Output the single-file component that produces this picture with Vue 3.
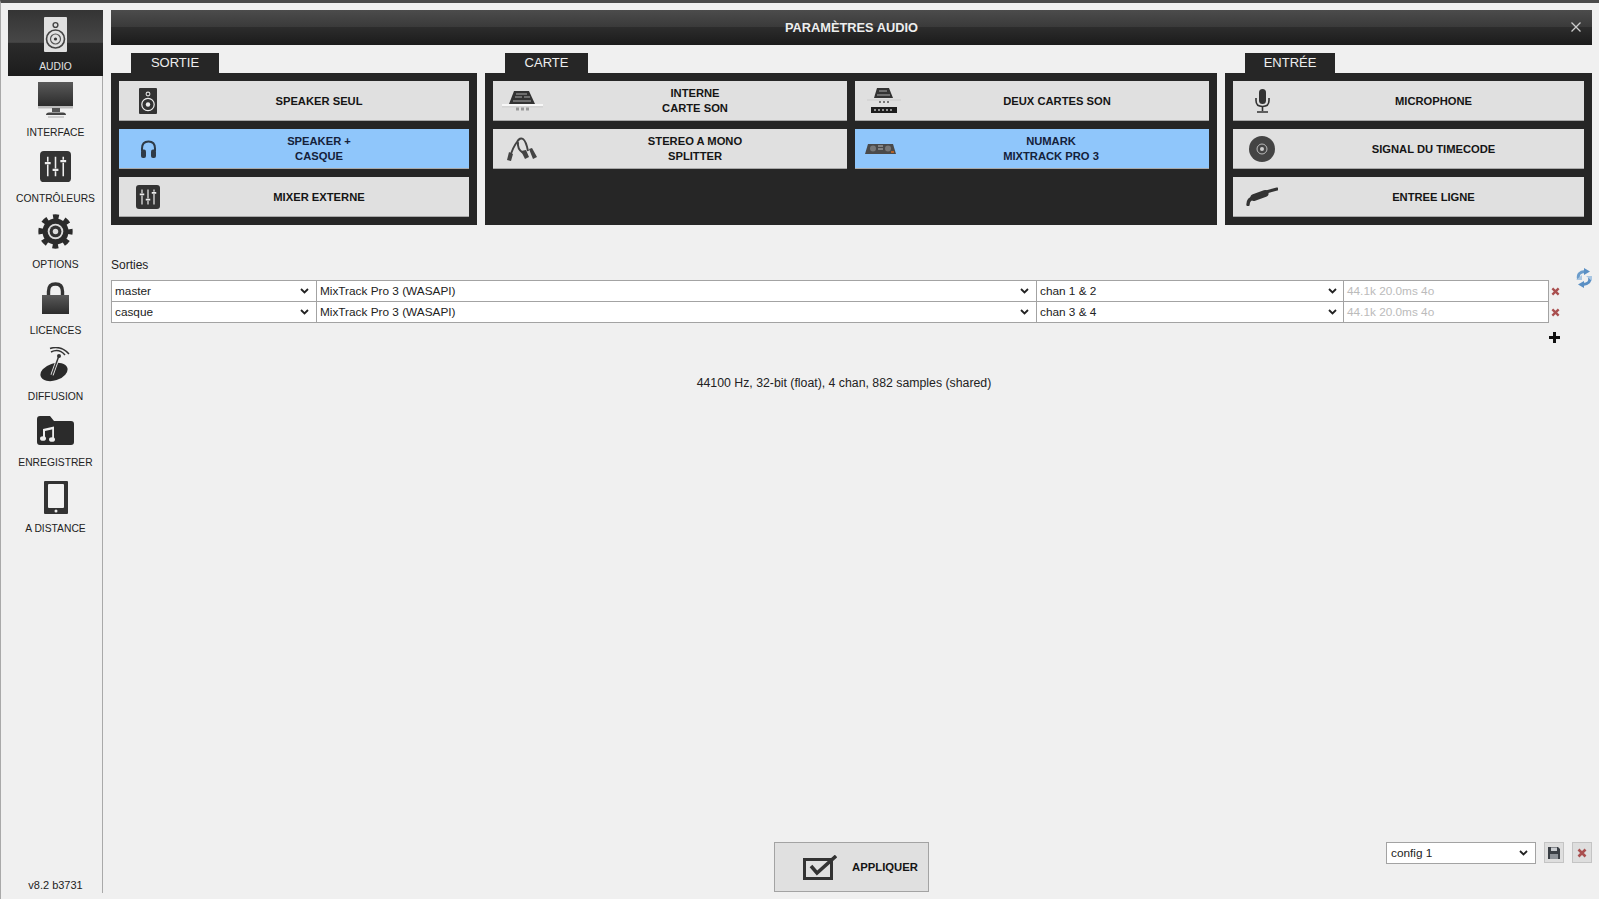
<script setup>
const navItems = [
  { label: 'Audio', icon: 'i-speaker-light', w: 23, h: 35, active: true },
  { label: 'Interface', icon: 'i-monitor', w: 35, h: 37 },
  { label: 'Contrôleurs', icon: 'i-sliders', w: 31, h: 31 },
  { label: 'Options', icon: 'i-gear', w: 35, h: 40 },
  { label: 'Licences', icon: 'i-lock', w: 27, h: 33 },
  { label: 'Diffusion', icon: 'i-dish', w: 31, h: 35 },
  { label: 'Enregistrer', icon: 'i-folder', w: 37, h: 29 },
  { label: 'A distance', icon: 'i-tablet', w: 24, h: 36 },
];

const sections = [
  {
    title: 'Sortie',
    tabWidth: 88,
    cols: 1,
    pads: [
      { lines: ['Speaker seul'], icon: 'i-speaker-dark', w: 18, h: 26 },
      { lines: ['Speaker +', 'Casque'], icon: 'i-headphones', w: 17, h: 18, active: true },
      { lines: ['Mixer externe'], icon: 'i-sliders', w: 24, h: 24 },
    ],
  },
  {
    title: 'Carte',
    tabWidth: 83,
    cols: 2,
    pads: [
      { lines: ['Interne', 'Carte son'], icon: 'i-card', w: 41, h: 20 },
      { lines: ['Deux cartes son'], icon: 'i-two-cards', w: 34, h: 25 },
      { lines: ['Stereo a mono', 'Splitter'], icon: 'i-splitter', w: 30, h: 24 },
      { lines: ['Numark', 'Mixtrack Pro 3'], icon: 'i-mixtrack', w: 31, h: 10, active: true, tight: true },
    ],
  },
  {
    title: 'Entrée',
    tabWidth: 90,
    cols: 1,
    pads: [
      { lines: ['Microphone'], icon: 'i-mic', w: 17, h: 24 },
      { lines: ['Signal du timecode'], icon: 'i-disc', w: 26, h: 26 },
      { lines: ['Entree ligne'], icon: 'i-jack', w: 32, h: 19 },
    ],
  },
];

const outputs = [
  { name: 'master', device: 'MixTrack Pro 3 (WASAPI)', channels: 'chan 1 & 2', info: '44.1k 20.0ms 4o' },
  { name: 'casque', device: 'MixTrack Pro 3 (WASAPI)', channels: 'chan 3 & 4', info: '44.1k 20.0ms 4o' },
];
</script>

<template>
  <div class="app">
    <svg class="sprites" aria-hidden="true">
      <defs>
        <linearGradient id="g-metal" x1="0" y1="0" x2="0" y2="1">
          <stop offset="0" stop-color="#5a5a5a" />
          <stop offset="1" stop-color="#2c2c2c" />
        </linearGradient>
        <symbol id="i-speaker-light" viewBox="0 0 23 35">
          <rect width="23" height="35" rx="1" fill="#e0e0e0" />
          <circle cx="11.5" cy="8" r="2.4" fill="none" stroke="#444" stroke-width="1.4" />
          <circle cx="11.5" cy="22" r="9" fill="none" stroke="#444" stroke-width="1.6" />
          <circle cx="11.5" cy="22" r="5" fill="none" stroke="#555" stroke-width="1.2" />
          <circle cx="11.5" cy="22" r="1.6" fill="#333" />
        </symbol>
        <symbol id="i-speaker-dark" viewBox="0 0 18 26">
          <rect width="18" height="26" rx="1" fill="#333" />
          <circle cx="9" cy="6" r="1.9" fill="none" stroke="#ddd" stroke-width="1.1" />
          <circle cx="9" cy="16.5" r="6.2" fill="none" stroke="#eee" stroke-width="1.2" />
          <circle cx="9" cy="16.5" r="2.2" fill="#eee" />
        </symbol>
        <symbol id="i-monitor" viewBox="0 0 35 37">
          <rect width="35" height="24" fill="url(#g-metal)" />
          <rect y="24" width="35" height="2.5" fill="#bbb" />
          <rect x="14" y="26" width="8" height="4" fill="#555" />
          <path d="M8 33 Q8 30.5 11 30.5 H25 Q28 30.5 28 33 Z" fill="#444" />
          <rect x="10" y="34" width="16" height="2" fill="#ccc" />
        </symbol>
        <symbol id="i-sliders" viewBox="0 0 32 32">
          <rect width="32" height="32" rx="4" fill="#333" />
          <g stroke="#eee" stroke-width="1.6" fill="none">
            <path d="M8 6 V11 M8 14 V26 M16 6 V18 M16 21 V26 M24 6 V9 M24 12 V26" />
            <path d="M5 12.5 H11 M13 19.5 H19 M21 10.5 H27" stroke-width="2.2" />
          </g>
        </symbol>
        <symbol id="i-gear" viewBox="0 -2 33 38">
          <circle cx="16.5" cy="16.5" r="13.6" fill="none" stroke="#2b2b2b" stroke-width="5.4" stroke-dasharray="5.34 5.34" stroke-dashoffset="2.67" />
          <circle cx="16.5" cy="16.5" r="12.4" fill="#2b2b2b" />
          <circle cx="16.5" cy="16.5" r="7.4" fill="#ddd" />
          <circle cx="16.5" cy="16.5" r="5.6" fill="#333" />
          <circle cx="16.5" cy="16.5" r="2.6" fill="#ddd" />
        </symbol>
        <symbol id="i-lock" viewBox="0 0 27 33">
          <path d="M6.5 14 V9.5 Q6.5 2 13.5 2 Q20.5 2 20.5 9.5 V14" fill="none" stroke="#333" stroke-width="3.4" />
          <rect y="13" width="27" height="19" fill="url(#g-metal)" />
        </symbol>
        <symbol id="i-dish" viewBox="0 0 31 35">
          <ellipse cx="14" cy="25" rx="14" ry="8.5" transform="rotate(-18 14 25)" fill="#2a2a2a" />
          <path d="M12 28 L18.5 10" stroke="#eee" stroke-width="3.2" />
          <path d="M12 28 L18.5 10" stroke="#333" stroke-width="1.5" />
          <circle cx="19" cy="9" r="2" fill="#333" />
          <g fill="none" stroke="#333" stroke-width="1.5">
            <path d="M11 5 Q19 1 25 8" />
            <path d="M10 1.5 Q21 -2 29 7" />
          </g>
        </symbol>
        <symbol id="i-folder" viewBox="0 0 37 29">
          <path d="M0 3 Q0 0 3 0 H13 L17 5 H34 Q37 5 37 8 V26 Q37 29 34 29 H3 Q0 29 0 26 Z" fill="#2b2b2b" />
          <g fill="#eee">
            <path d="M6 13 L17 10.5 V13 L8 15 V22 H6 Z" />
            <rect x="15.2" y="11" width="1.8" height="12" />
            <ellipse cx="6" cy="22.5" rx="3" ry="2.3" />
            <ellipse cx="15" cy="23.5" rx="3" ry="2.3" />
          </g>
        </symbol>
        <symbol id="i-tablet" viewBox="0 -3 24 36">
          <rect width="24" height="33" rx="1" fill="#333" />
          <rect x="4" y="3" width="16" height="24" rx="1" fill="#f2f2f2" />
          <circle cx="12" cy="30" r="1.5" fill="#eee" />
        </symbol>
        <symbol id="i-headphones" viewBox="0 0 17 18">
          <path d="M2 11 V8.5 Q2 1.5 8.5 1.5 Q15 1.5 15 8.5 V11" fill="none" stroke="#2f3b47" stroke-width="2" />
          <rect x="1" y="9.5" width="5" height="8.5" rx="2" fill="#2f3b47" />
          <rect x="11" y="9.5" width="5" height="8.5" rx="2" fill="#2f3b47" />
        </symbol>
        <symbol id="i-card" viewBox="0 0 41 20">
          <path d="M12 0 H27 L33 13 H7 Z" fill="#333" />
          <path d="M14 3 H25 M13 6 H20 M22 6 H28 M11 10 H29" stroke="#aaa" stroke-width="1" />
          <rect y="13" width="41" height="2.5" fill="#f7f7f7" />
          <rect y="15.5" width="41" height=".7" fill="#bbb" />
          <path d="M14 16.5 H17 V19.5 H14 Z M19 16.5 H22 V19.5 H19 Z M24 16.5 H27 V19.5 H24 Z" fill="#999" />
        </symbol>
        <symbol id="i-two-cards" viewBox="0 0 34 25">
          <path d="M10 0 H22 L26 10 H7 Z" fill="#333" />
          <path d="M12 3 H20 M10 7 H23" stroke="#aaa" stroke-width="1" />
          <path d="M0 12 H34" stroke="#ccc" stroke-width="1" />
          <path d="M12 13 H14 V15 H12 Z M16 13 H18 V15 H16 Z M20 13 H22 V15 H20 Z" fill="#777" />
          <rect x="4" y="19" width="26" height="6" fill="#1d1d1d" />
          <path d="M7 22 H27" stroke="#bbb" stroke-width="1.5" stroke-dasharray="2 2" />
        </symbol>
        <symbol id="i-splitter" viewBox="0 0 30 24">
          <g fill="none" stroke="#444" stroke-width="2">
            <path d="M3 20 Q6 10 10 5 Q13 0 16 2 Q19 4 21 14" />
            <path d="M11 5 Q10 12 16 16" />
          </g>
          <path d="M0 23 L2 15 L6 17 L4 24 Z M14 14 L19 13 L22 20 L18 22 Z M22 12 L25 11 L30 20 L26 22 Z" fill="#444" />
        </symbol>
        <symbol id="i-mixtrack" viewBox="0 0 31 10">
          <path d="M3 0 H28 L31 10 H0 Z" fill="#4a4a4a" />
          <circle cx="8" cy="4.5" r="3" fill="#777" />
          <circle cx="23" cy="4.5" r="3" fill="#777" />
          <path d="M13 2 H18 M13 5 H18" stroke="#bbb" stroke-width="1" />
          <rect x="26" y="7" width="3" height="2" fill="#b5622a" />
        </symbol>
        <symbol id="i-mic" viewBox="0 0 17 24">
          <rect x="5" y="0" width="7" height="15" rx="3.5" fill="#333" />
          <path d="M2 9 V11.5 Q2 17.5 8.5 17.5 Q15 17.5 15 11.5 V9" fill="none" stroke="#333" stroke-width="1.6" />
          <path d="M8.5 17.5 V22 M3 23 H14" stroke="#333" stroke-width="1.6" />
        </symbol>
        <symbol id="i-disc" viewBox="0 0 26 26">
          <circle cx="13" cy="13" r="13" fill="#444" />
          <circle cx="13" cy="13" r="5" fill="none" stroke="#bbb" stroke-width="1" />
          <circle cx="13" cy="13" r="2" fill="#ccc" />
        </symbol>
        <symbol id="i-jack" viewBox="0 0 32 19">
          <g fill="none" stroke="#333" stroke-linecap="round">
            <path d="M2 17.5 Q2 12 8 10.5" stroke-width="3.4" />
            <path d="M8 10.5 L19 6.5" stroke-width="7" />
            <path d="M20 5 L31 2" stroke-width="3" />
          </g>
        </symbol>
        <symbol id="i-refresh" viewBox="0 0 16 20">
          <g fill="none" stroke-width="3">
            <path d="M2.5 11 Q1 4 9 3.5" stroke="#6b9ccb" />
            <path d="M13.5 9 Q15 16 7 16.5" stroke="#5a8fc4" />
          </g>
          <path d="M8 0 L14 3.5 L8 7 Z M8 13 L2 16.5 L8 20 Z" fill="#5a8fc4" />
          <path d="M10 8 H16 V13 Z M0 12 H6 V7 Z" fill="#a9c6e2" />
        </symbol>
        <symbol id="i-cross" viewBox="0 0 10 10">
          <path d="M1.5 1.5 L8.5 8.5 M8.5 1.5 L1.5 8.5" stroke="#a94f4f" stroke-width="2.6" />
        </symbol>
        <symbol id="i-floppy" viewBox="0 0 12 12">
          <path d="M0 0 H10 L12 2 V12 H0 Z" fill="#3a3f45" />
          <rect x="3" y="0.5" width="6" height="3.5" fill="#c9ccd0" />
          <rect x="2" y="7" width="8" height="5" fill="#8d9298" />
        </symbol>
      </defs>
    </svg>

    <nav class="sidebar">
      <div v-for="item in navItems" :key="item.label" class="nav-item" :class="{ 'nav-item--active': item.active }">
        <div class="nav-item__icon">
          <svg :width="item.w" :height="item.h"><use :href="'#' + item.icon" /></svg>
        </div>
        <span class="nav-item__label">{{ item.label }}</span>
      </div>
      <div class="sidebar__version">v8.2 b3731</div>
    </nav>

    <main class="main">
      <header class="title-bar">
        <span>PARAMÈTRES AUDIO</span>
        <button class="title-bar__close" aria-label="Fermer">
          <svg width="10" height="10" viewBox="0 0 10 10"><path d="M.5 .5 L9.5 9.5 M9.5 .5 L.5 9.5" stroke="#ccc" stroke-width="1.3" /></svg>
        </button>
      </header>

      <div class="sections">
        <section v-for="section in sections" :key="section.title" class="section">
          <div class="section__tab" :style="{ width: section.tabWidth + 'px' }">{{ section.title }}</div>
          <div class="section__panel" :class="{ 'section__panel--double': section.cols === 2 }">
            <button
              v-for="pad in section.pads"
              :key="pad.lines[0]"
              class="pad"
              :class="{ 'pad--active': pad.active, 'pad--tight': pad.tight }"
            >
              <span class="pad__icon">
                <svg :width="pad.w" :height="pad.h"><use :href="'#' + pad.icon" /></svg>
              </span>
              <span class="pad__text">
                <span v-for="line in pad.lines" :key="line">{{ line }}</span>
              </span>
            </button>
          </div>
        </section>
      </div>

      <div class="outputs">
        <div class="outputs__title">Sorties</div>
        <div class="outputs__table">
          <svg class="outputs__refresh" width="16" height="20"><use href="#i-refresh" /></svg>
          <div v-for="row in outputs" :key="row.name" class="output-row">
            <div class="cell cell--name">
              <span>{{ row.name }}</span>
              <svg class="chevron" width="9" height="6" viewBox="0 0 9 6"><path d="M1 1 L4.5 4.5 L8 1" fill="none" stroke="#222" stroke-width="1.8" /></svg>
            </div>
            <div class="cell cell--device">
              <span>{{ row.device }}</span>
              <svg class="chevron" width="9" height="6" viewBox="0 0 9 6"><path d="M1 1 L4.5 4.5 L8 1" fill="none" stroke="#222" stroke-width="1.8" /></svg>
            </div>
            <div class="cell cell--channels">
              <span>{{ row.channels }}</span>
              <svg class="chevron" width="9" height="6" viewBox="0 0 9 6"><path d="M1 1 L4.5 4.5 L8 1" fill="none" stroke="#222" stroke-width="1.8" /></svg>
            </div>
            <div class="cell cell--info">{{ row.info }}</div>
            <svg class="output-row__remove" width="9" height="9"><use href="#i-cross" /></svg>
          </div>
          <div class="outputs__add">
            <svg width="11" height="11" viewBox="0 0 11 11"><path d="M5.5 0 V11 M0 5.5 H11" stroke="#111" stroke-width="3" /></svg>
          </div>
        </div>
        <div class="outputs__status">44100 Hz, 32-bit (float), 4 chan, 882 samples (shared)</div>
      </div>

      <footer class="footer">
        <span></span>
        <button class="apply">
          <svg width="34" height="25" viewBox="0 0 34 25">
            <rect x="1.5" y="4.5" width="27" height="19" fill="none" stroke="#333" stroke-width="3" />
            <path d="M8 11 L14 18 L33 1" fill="none" stroke="#333" stroke-width="3.5" />
          </svg>
          <span>APPLIQUER</span>
        </button>
        <div class="footer__config">
          <div class="cell cell--config">
            <span>config 1</span>
            <svg class="chevron" width="9" height="6" viewBox="0 0 9 6"><path d="M1 1 L4.5 4.5 L8 1" fill="none" stroke="#222" stroke-width="1.8" /></svg>
          </div>
          <button class="mini-btn" aria-label="Enregistrer"><svg width="12" height="12"><use href="#i-floppy" /></svg></button>
          <button class="mini-btn" aria-label="Supprimer"><svg width="10" height="10"><use href="#i-cross" /></svg></button>
        </div>
      </footer>
    </main>
  </div>
</template>

<style>
html,
body {
  background: #efefef;
  overflow: hidden;
}
</style>

<style scoped>
.app {
  box-sizing: border-box;
  display: flex;
  width: 1599px;
  height: 899px;
  border-top: 3px solid #4a4a4a;
  border-left: 1px solid #a9a9a9;
  background: #f0f0f0;
  color: #222;
  font-family: "Liberation Sans", Arial, sans-serif;
  font-size: 12px;
}

.sprites {
  position: absolute;
  width: 0;
  height: 0;
}

.sidebar {
  box-sizing: border-box;
  display: flex;
  flex-direction: column;
  flex: none;
  width: 102px;
  height: 883px;
  margin-top: 7px;
  padding-left: 7px;
  border-right: 1px solid #a9a9a9;
}

.nav-item {
  display: flex;
  flex-direction: column;
  align-items: center;
  flex: none;
  width: 95px;
  height: 66px;
}

.nav-item--active {
  background: linear-gradient(#343434 0, #474747 49%, #2b2b2b 50%, #1c1c1c 100%);
  color: #e2e2e2;
}

.nav-item__icon {
  display: flex;
  align-items: center;
  justify-content: center;
  height: 48px;
}

.nav-item__icon svg {
  display: block;
}

.nav-item__label {
  margin-top: 2px;
  font-size: 10.3px;
  line-height: 13px;
  text-transform: uppercase;
  white-space: nowrap;
}

.sidebar__version {
  margin-top: auto;
  margin-bottom: 1px;
  width: 95px;
  font-size: 11px;
  line-height: 14px;
  text-align: center;
}

.main {
  display: flex;
  flex-direction: column;
  flex: none;
  box-sizing: border-box;
  width: 1481px;
  height: 889px;
  margin-left: 8px;
  padding-top: 7px;
}

.title-bar {
  position: relative;
  display: flex;
  align-items: center;
  justify-content: center;
  flex: none;
  height: 35px;
  padding-bottom: 1px;
  box-sizing: border-box;
  background: linear-gradient(#4c4c4c 0, #3a3a3a 48%, #2c2c2c 50%, #1b1b1b 100%);
  color: #eee;
  font-size: 12.8px;
  font-weight: 700;
}

.title-bar__close {
  position: absolute;
  right: 11px;
  top: 12px;
  padding: 0;
  border: 0;
  background: none;
  line-height: 0;
}

.sections {
  display: grid;
  grid-template-columns: 366px 732px 367px;
  gap: 8px;
  margin-top: 8px;
}

.section__tab {
  height: 20px;
  margin-left: 20px;
  background: #262626;
  color: #eee;
  font-size: 13px;
  line-height: 20px;
  text-align: center;
  text-transform: uppercase;
}

.section__panel {
  box-sizing: border-box;
  display: grid;
  grid-template-columns: 1fr;
  grid-auto-rows: 40px;
  gap: 8px;
  height: 152px;
  padding: 8px;
  background: #262626;
}

.section__panel--double {
  grid-template-columns: 1fr 1fr;
}

.pad {
  box-sizing: border-box;
  display: flex;
  align-items: center;
  padding: 0;
  border: 1px solid #a8a8a8;
  border-width: 0 0 1px;
  background: #e0e0e0;
  color: #151515;
  font-family: inherit;
}

.pad--active {
  background: #8fc6fb;
  color: #14213a;
}

.pad__icon {
  box-sizing: border-box;
  display: flex;
  align-items: center;
  justify-content: center;
  flex: none;
  width: 50px;
  padding-left: 8px;
}

.pad__icon svg {
  display: block;
  flex: none;
}

.pad__text {
  display: flex;
  flex-direction: column;
  flex: 1;
  padding-top: 1px;
  font-size: 11.2px;
  font-weight: 700;
  line-height: 15px;
  text-align: center;
  text-transform: uppercase;
}

.pad--tight .pad__icon {
  padding-left: 0;
}

.pad--tight .pad__text {
  padding-right: 12px;
}

.outputs {
  display: flex;
  flex-direction: column;
}

.outputs__title {
  margin-top: 33px;
  line-height: 14px;
}

.outputs__table {
  position: relative;
  margin-top: 8px;
}

.outputs__refresh {
  position: absolute;
  top: -12px;
  right: 0;
}

.output-row {
  display: flex;
  align-items: center;
}

.output-row + .output-row {
  margin-top: -1px;
}

.cell {
  box-sizing: border-box;
  display: flex;
  align-items: center;
  justify-content: space-between;
  height: 22px;
  padding: 0 7px 0 3px;
  border: 1px solid #a3a3a3;
  border-left-width: 0;
  background: #fff;
  font-size: 11.8px;
  white-space: nowrap;
}

.cell--name {
  width: 206px;
  border-left-width: 1px;
}

.cell--device {
  width: 720px;
}

.cell--channels {
  width: 307px;
  padding-right: 6px;
}

.cell--info {
  width: 205px;
  color: #bbb;
}

.cell--config {
  width: 150px;
  padding-left: 4px;
  border-left-width: 1px;
}

.chevron {
  flex: none;
}

.output-row__remove {
  margin-left: 2px;
}

.outputs__add {
  display: flex;
  justify-content: flex-end;
  width: 1449px;
  margin-top: 9px;
}

.outputs__add svg {
  display: block;
}

.outputs__status {
  margin-top: 33px;
  padding-right: 15px;
  font-size: 12.3px;
  line-height: 14px;
  text-align: center;
}

.footer {
  display: grid;
  grid-template-columns: 1fr 155px 1fr;
  margin-top: auto;
}

.apply {
  box-sizing: border-box;
  display: flex;
  align-items: center;
  gap: 15px;
  height: 50px;
  padding: 0 0 0 28px;
  border: 1px solid #a3a3a3;
  background: #e0e0e0;
  color: #151515;
  font-family: inherit;
  font-size: 11.3px;
  font-weight: 700;
}

.apply svg {
  flex: none;
}

.footer__config {
  display: flex;
  justify-content: flex-end;
  align-items: flex-start;
  gap: 8px;
}

.mini-btn {
  display: flex;
  align-items: center;
  justify-content: center;
  width: 20px;
  height: 21px;
  padding: 0;
  border: 1px solid #c4c4c4;
  background: #dedede;
}
</style>
